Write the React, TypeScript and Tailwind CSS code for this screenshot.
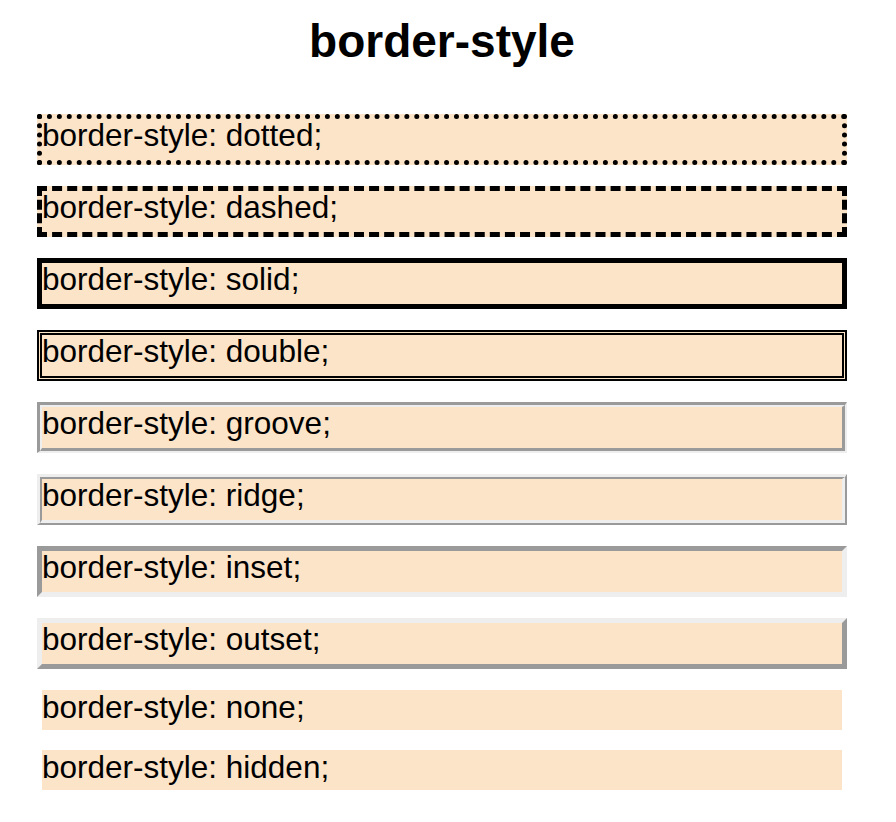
import React from 'react'

const text = "text-[31.5px] leading-[32px]"

const Label = ({ name }: { name: string }) => (
  <span className={text}>border-style: {name};</span>
)

// groove / ridge are two-tone per side, so they get an outer and inner frame
const TwoTone = ({ name, outer, inner }: { name: string; outer: string; inner: string }) => (
  <div className={`w-[810px] h-[51px] border-solid ${outer}`}>
    <div className={`h-full bg-[#fbe4c8] border-solid ${inner}`}>
      <Label name={name} />
    </div>
  </div>
)

const App = () => {
  return (
    <div className="w-[884px] flex flex-col items-center text-black font-['Liberation_Sans',Arial,sans-serif]">
      <h1 className="mt-[18px] text-[46px] leading-[46px] font-bold">border-style</h1>
      <div className="mt-[50px] flex flex-col items-center gap-[21px]">
        <div className="w-[810px] h-[51px] border-[5px] border-dotted border-black bg-[#fbe4c8]">
          <Label name="dotted" />
        </div>
        <div className="w-[810px] h-[51px] border-[5px] border-dashed border-black bg-[#fbe4c8]">
          <Label name="dashed" />
        </div>
        <div className="w-[810px] h-[51px] border-[5px] border-solid border-black bg-[#fbe4c8]">
          <Label name="solid" />
        </div>
        <div className="w-[810px] h-[51px] border-[5px] border-double border-black bg-[#fbe4c8]">
          <Label name="double" />
        </div>
        <TwoTone
          name="groove"
          outer="border-t-[3px] border-l-[3px] border-b-[2px] border-r-[2px] border-t-[#9a9a9a] border-l-[#9a9a9a] border-b-[#eeeeee] border-r-[#eeeeee]"
          inner="border-t-[2px] border-l-[2px] border-b-[3px] border-r-[3px] border-t-[#eeeeee] border-l-[#eeeeee] border-b-[#9a9a9a] border-r-[#9a9a9a]"
        />
        <TwoTone
          name="ridge"
          outer="border-t-[3px] border-l-[3px] border-b-[2px] border-r-[2px] border-t-[#eeeeee] border-l-[#eeeeee] border-b-[#9a9a9a] border-r-[#9a9a9a]"
          inner="border-t-[2px] border-l-[2px] border-b-[3px] border-r-[3px] border-t-[#9a9a9a] border-l-[#9a9a9a] border-b-[#eeeeee] border-r-[#eeeeee]"
        />
        <div className="w-[810px] h-[51px] border-[5px] border-solid border-t-[#9a9a9a] border-l-[#9a9a9a] border-b-[#eeeeee] border-r-[#eeeeee] bg-[#fbe4c8]">
          <Label name="inset" />
        </div>
        <div className="w-[810px] h-[51px] border-[5px] border-solid border-t-[#eeeeee] border-l-[#eeeeee] border-b-[#9a9a9a] border-r-[#9a9a9a] bg-[#fbe4c8]">
          <Label name="outset" />
        </div>
        <div className="w-[800px] h-[40px] border-none bg-[#fbe4c8] text-[31.5px] leading-[34px]">
          border-style: none;
        </div>
      </div>
      <div className="mt-[20px] w-[800px] h-[40px] border-hidden bg-[#fbe4c8] text-[31.5px] leading-[34px]">
        border-style: hidden;
      </div>
    </div>
  )
}

export default App
